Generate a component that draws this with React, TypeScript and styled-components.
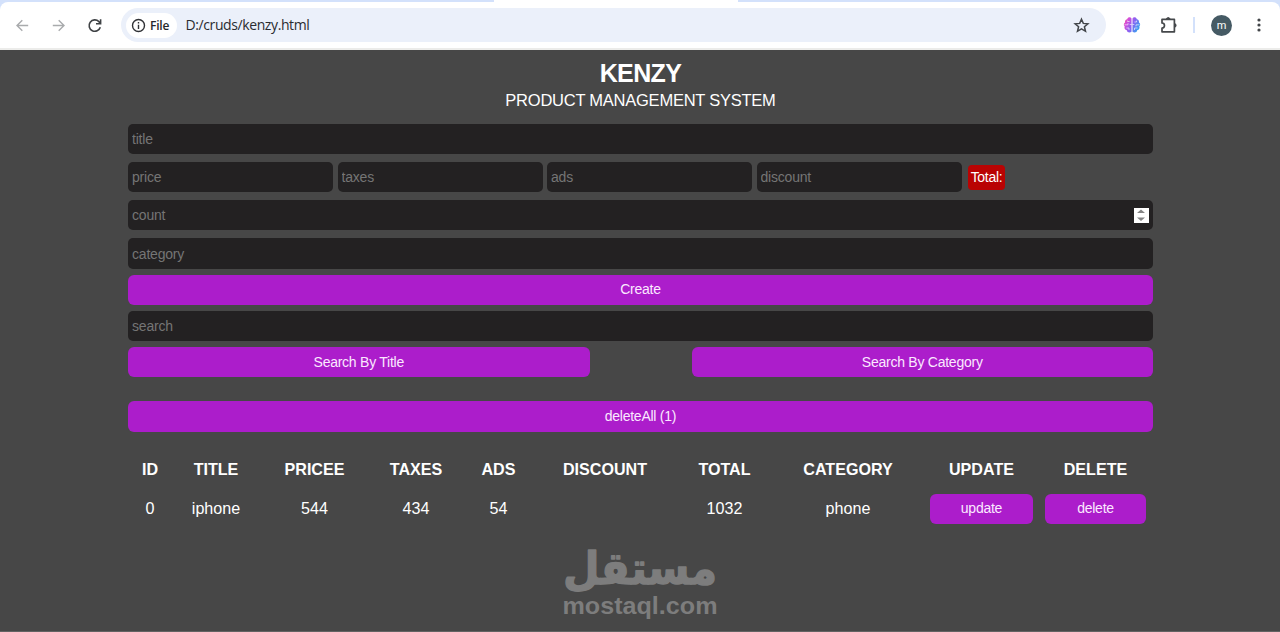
import React from 'react';
import styled, { createGlobalStyle } from 'styled-components';

const GlobalStyle = createGlobalStyle`
  * { box-sizing: border-box; }
  body { margin: 0; background: #474747; font-family: "Liberation Sans", Arial, sans-serif; overflow: hidden; }
`;

const Window = styled.div`
  display: flex;
  flex-direction: column;
  height: 632px;
  background: #474747;
  border-bottom: 1px solid #636363;
  color: #fff;
`;

const TabStrip = styled.div`
  display: flex;
  justify-content: space-between;
  height: 2px;
  flex: none;
  background: #fff;
`;

const StripEdge = styled.div<{ $width: number }>`
  width: ${p => p.$width}px;
  background: #d3e1fb;
`;

const ToolbarFrame = styled.div`
  flex: none;
  height: 48px;
  background: #d3e1fb;
`;

const Toolbar = styled.div`
  display: flex;
  align-items: center;
  height: 48px;
  padding: 0 11px 0 13px;
  background: #fff;
  border-bottom: 2px solid #ececea;
  border-radius: 8px 8px 0 0;
`;

const NavButtons = styled.div`
  display: flex;
  gap: 17px;
  width: 108px;
  svg { display: block; }
`;

const Omnibox = styled.div`
  display: flex;
  align-items: center;
  width: 985px;
  height: 34px;
  padding: 0 16px 0 5px;
  border-radius: 17px;
  background: #ebf0fa;
`;

const SchemeChip = styled.div`
  display: flex;
  align-items: center;
  gap: 4px;
  width: 51px;
  height: 25px;
  padding-left: 5px;
  border-radius: 13px;
  background: #fff;
  color: #26282b;
  font: 600 12px "Open Sans", "Noto Sans", sans-serif;
  letter-spacing: -0.2px;
  svg { flex: none; }
`;

const Address = styled.span`
  flex: 1;
  padding: 0 0 1px 8.5px;
  color: #2a2c30;
  font: 14px "Open Sans", "Noto Sans", sans-serif;
  letter-spacing: -0.4px;
`;

const BrowserActions = styled.div`
  display: flex;
  align-items: center;
  flex: 1;
  padding-left: 17px;
`;

const Divider = styled.i`
  width: 2px;
  height: 16px;
  margin: 0 16px 0 14px;
  background: #d3e1fb;
`;

const Avatar = styled.div`
  display: grid;
  place-items: center;
  width: 21px;
  height: 21px;
  margin-right: auto;
  border-radius: 50%;
  background: #455a64;
  color: #fff;
  font: 11px/1 Roboto, sans-serif;
`;

const Page = styled.main`
  display: flex;
  flex-direction: column;
  width: 1025px;
  margin-left: 128px;
`;

const Heading = styled.header`
  height: 73.6px;
  padding-top: 9px;
  text-align: center;
`;

const Title = styled.h1`
  margin: 0;
  font-size: 25px;
  line-height: 29px;
  letter-spacing: -0.6px;
`;

const Subtitle = styled.p`
  margin: 0;
  padding-top: 3px;
  font-size: 16.5px;
  line-height: 19px;
  letter-spacing: -0.24px;
`;

const Field = styled.div<{ $gap?: number }>`
  position: relative;
  display: flex;
  align-items: center;
  margin-bottom: ${p => p.$gap ?? 8}px;
`;

const Input = styled.input`
  width: 100%;
  height: 30.3px;
  padding: 0 4px;
  border: 0;
  border-radius: 5px;
  outline: 0;
  background: #232122;
  color: #fff;
  font: 14px "Liberation Sans", Arial, sans-serif;
  letter-spacing: -0.2px;
  &::placeholder { color: #757575; opacity: 1; }
`;

const PriceRow = styled.div`
  display: flex;
  align-items: center;
  gap: 4.5px;
  margin-bottom: 8px;
  ${Input} { width: 205px; }
`;

const Total = styled.span`
  height: 25px;
  width: 37px;
  margin-left: 2px;
  border-radius: 4px;
  background: #b90303;
  font-size: 14px;
  line-height: 25px;
  text-align: center;
  letter-spacing: -0.3px;
`;

const Stepper = styled.svg`
  position: absolute;
  right: 4px;
  top: 7.4px;
`;

const Button = styled.button<{ $gap?: number; $width?: string }>`
  display: block;
  width: ${p => p.$width ?? '100%'};
  height: 30.3px;
  margin: 0 0 ${p => p.$gap ?? 0}px;
  padding: 0 0 1px;
  border: 0;
  border-radius: 6px;
  background: #ac1dcb;
  color: #fbe9ff;
  font: 14px "Liberation Sans", Arial, sans-serif;
  letter-spacing: -0.25px;
`;

const SearchButtons = styled.div`
  display: flex;
  justify-content: space-between;
  margin-bottom: 24px;
`;

const ProductTable = styled.table`
  table-layout: fixed;
  width: 1023px;
  margin: 21.4px 0 0 0.5px;
  border-collapse: collapse;
  font-size: 16.1px;
  text-align: center;
  th, td { padding: 0; }
  th { height: 33px; }
  td { height: 45px; }
  td ${Button} { margin: 0 auto; }
`;

const Watermark = styled.footer`
  display: flex;
  flex-direction: column;
  align-items: center;
  margin-top: 15px;
  color: #7d7d7d;
  svg { display: block; overflow: visible; }
`;

const columns = [
  { label: 'ID', width: 43 },
  { label: 'TITLE', width: 89 },
  { label: 'PRICEE', width: 108 },
  { label: 'TAXES', width: 95 },
  { label: 'ADS', width: 70 },
  { label: 'DISCOUNT', width: 143 },
  { label: 'TOTAL', width: 96 },
  { label: 'CATEGORY', width: 151 },
  { label: 'UPDATE', width: 116 },
  { label: 'DELETE', width: 112 },
];

const values = ['0', 'iphone', '544', '434', '54', '', '1032', 'phone'];

const Col = styled.col<{ $width: number }>`
  width: ${p => p.$width}px;
`;

const Arrow = ({ back = false }: { back?: boolean }) => (
  <svg width="19" height="19" viewBox="0 0 19 19" fill="none" stroke="#a9abad" strokeWidth="1.4">
    <path d={back ? 'M15.2 9.5H4.5M9.3 4.2L4 9.5L9.3 14.8' : 'M3.8 9.5H14.5M9.7 4.2L15 9.5L9.7 14.8'} />
  </svg>
);

const Reload = () => (
  <svg width="19" height="19" viewBox="0 0 19 19" fill="none" stroke="#3f4245" strokeWidth="1.6">
    <path d="M15.3 11.2A5.7 5.7 0 1 1 13.9 5.6L15.5 7.4" />
    <path d="M15.6 3.2V7.7H11" />
  </svg>
);

const Brain = () => (
  <svg width="18" height="18" viewBox="0 0 18 18">
    <defs>
      <linearGradient id="lobe" x1="0" y1="0" x2="1" y2="0.5">
        <stop offset="0" stopColor="#f0816d" />
        <stop offset="0.25" stopColor="#d94cd8" />
        <stop offset="0.6" stopColor="#8b62f2" />
        <stop offset="1" stopColor="#3d9cf0" />
      </linearGradient>
    </defs>
    <path fill="url(#lobe)" d="M8.5 2.4V15.8C6.7 17.3 4.1 16.5 3.8 14.3C1.8 14 1 12 1.7 10.5C.4 9.2.6 7.3 2 6.4C1.7 4.6 2.7 3.4 4.2 3.2C4.8 1 7.6.8 8.5 2.4ZM9.5 2.4C10.4.8 13.2 1 13.8 3.2C15.3 3.4 16.3 4.6 16 6.4C17.4 7.3 17.6 9.2 16.3 10.5C17 12 16.2 14 14.2 14.3C13.9 16.5 11.3 17.3 9.5 15.8Z" />
    <path fill="none" stroke="#fff" strokeWidth="0.6" d="M1.5 8.8H5V7.2M4.5 4.6V5.5H6.6M8.6 8.5H6.7M3.4 12H6V14M16.5 8.8H13V10.4M13.5 4.6V6H11.4M9.4 8.5H11.3M14.6 12H11.5V14" />
  </svg>
);

const PuzzleIcon = styled.svg`
  margin-left: 18px;
`;

const Puzzle = () => (
  <PuzzleIcon width="20" height="20" viewBox="0 0 20 20">
    <path fill="none" stroke="#45484b" strokeWidth="1.7" strokeLinejoin="round" d="M3 4.4H15.4V16.8H3V13.2C6.3 13.2 6.3 8 3 8Z" />
    <path fill="#45484b" d="M7 4.4V3.6Q9.2 .5 11.4 3.6V4.4ZM15.4 8.2H16.2Q19 10.4 16.2 12.6H15.4Z" />
  </PuzzleIcon>
);

export default function App() {
  return (
    <Window>
      <GlobalStyle />
      <TabStrip><StripEdge $width={494} /><StripEdge $width={542} /></TabStrip>
      <ToolbarFrame>
        <Toolbar>
          <NavButtons><Arrow back /><Arrow /><Reload /></NavButtons>
          <Omnibox>
            <SchemeChip>
              <svg width="15" height="15" viewBox="0 0 15 15" fill="none" stroke="#303236" strokeWidth="1.4">
                <circle cx="7.5" cy="7.5" r="6" /><path d="M7.5 6.7V11M7.5 4V5.4" />
              </svg>
              File
            </SchemeChip>
            <Address>D:/cruds/kenzy.html</Address>
            <svg width="17" height="17" viewBox="0 0 17 17" fill="none" stroke="#424549" strokeWidth="1.5">
              <path d="M8.5 2.2L10.3 6.4L14.9 6.8L11.4 9.8L12.5 14.3L8.5 11.9L4.5 14.3L5.6 9.8L2.1 6.8L6.7 6.4Z" />
            </svg>
          </Omnibox>
          <BrowserActions>
            <Brain />
            <Puzzle />
            <Divider />
            <Avatar>m</Avatar>
            <svg width="20" height="20" viewBox="0 0 20 20" fill="#424549">
              <circle cx="10" cy="5" r="1.6" /><circle cx="10" cy="10" r="1.6" /><circle cx="10" cy="15" r="1.6" />
            </svg>
          </BrowserActions>
        </Toolbar>
      </ToolbarFrame>
      <Page>
        <Heading>
          <Title>KENZY</Title>
          <Subtitle>PRODUCT MANAGEMENT SYSTEM</Subtitle>
        </Heading>
        <Field><Input placeholder="title" /></Field>
        <PriceRow>
          <Input placeholder="price" />
          <Input placeholder="taxes" />
          <Input placeholder="ads" />
          <Input placeholder="discount" />
          <Total>Total:</Total>
        </PriceRow>
        <Field>
          <Input placeholder="count" />
          <Stepper width="15" height="15" viewBox="0 0 15 15">
            <path fill="#fff" d="M0 0H15V15H0Z" />
            <path fill="#858585" d="M3 5L7 1.5L11 5ZM3 9.5L7 13L11 9.5Z" />
          </Stepper>
        </Field>
        <Field $gap={6}><Input placeholder="category" /></Field>
        <Button $gap={5.8}>Create</Button>
        <Field $gap={6}><Input placeholder="search" /></Field>
        <SearchButtons>
          <Button $width="461.5px">Search By Title</Button>
          <Button $width="461.5px">Search By Category</Button>
        </SearchButtons>
        <Button>deleteAll (1)</Button>
        <ProductTable>
          <colgroup>{columns.map(c => <Col key={c.label} $width={c.width} />)}</colgroup>
          <thead><tr>{columns.map(c => <th key={c.label}>{c.label}</th>)}</tr></thead>
          <tbody>
            <tr>
              {values.map((v, i) => <td key={i}>{v}</td>)}
              <td><Button $width="103px">update</Button></td>
              <td><Button $width="101px">delete</Button></td>
            </tr>
          </tbody>
        </ProductTable>
        <Watermark>
          <svg width="156" height="74" viewBox="0 0 156 74" fill="#7d7d7d">
            <text x="77" y="38" textAnchor="middle" direction="rtl" fontFamily="DejaVu Sans, sans-serif" fontWeight="700" fontSize="45" stroke="#7d7d7d" strokeWidth="1.4" strokeLinejoin="round" textLength="154" lengthAdjust="spacingAndGlyphs">مستقل</text>
            <text x="77" y="67.5" textAnchor="middle" fontFamily="Liberation Sans, Arial, sans-serif" fontWeight="700" fontSize="24" textLength="155" lengthAdjust="spacingAndGlyphs">mostaql.com</text>
          </svg>
        </Watermark>
      </Page>
    </Window>
  );
}
